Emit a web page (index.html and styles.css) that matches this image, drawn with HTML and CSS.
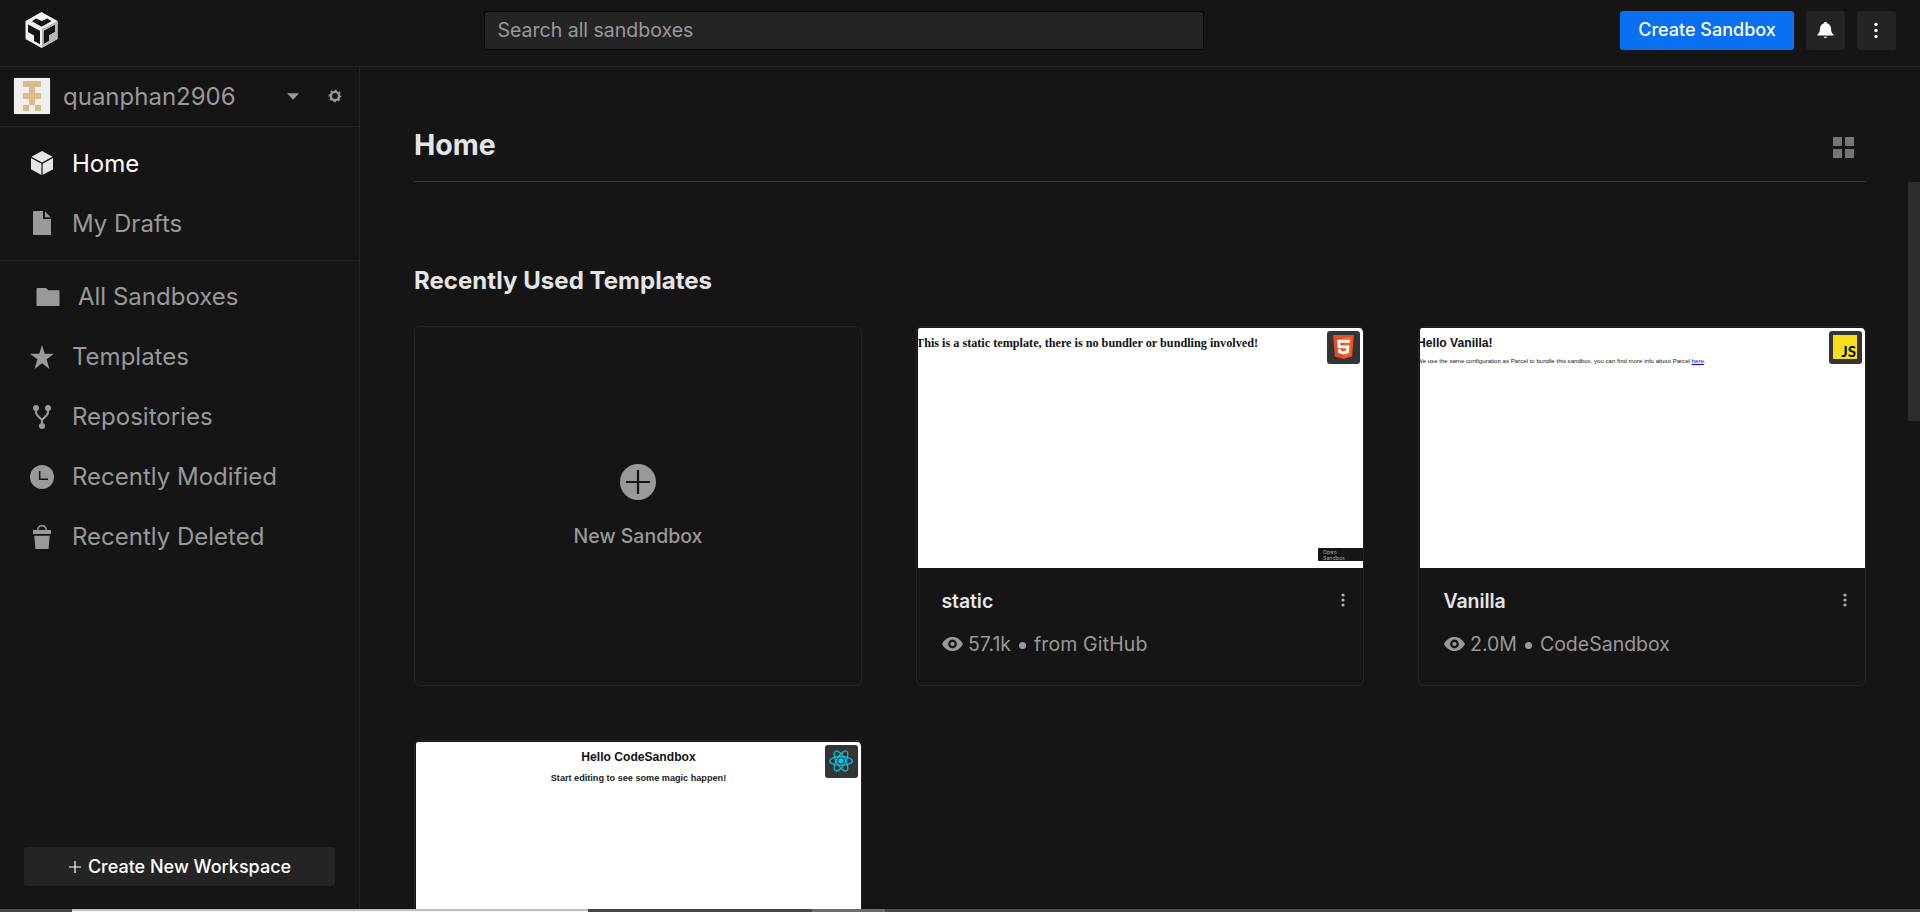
FILE: index.html
```html
<!DOCTYPE html>
<html lang="en">
<head>
<meta charset="utf-8">
<title>Home - CodeSandbox</title>
<link rel="stylesheet" href="styles.css">
</head>
<body>
<div class="app">
  <header class="topbar">
    <svg class="logo" width="34" height="38" viewBox="0 0 34 38">
      <path fill="#f2f2f2" fill-rule="evenodd" d="M16.500 1 32.500 10 V28 L16.500 37 .5 28 V10Z M7 10.300 16.500 15.800 26.500 10.300 22.300 7.600 16.500 10 11 7.600Z M3 13.500 V21 L9 24.500 V30 L15 33.300 V19.800Z M18.500 19.800 V33.300 L24 30 V24.500 L30 21 V13.500Z"/>
      <path fill="#b8b8b8" fill-rule="evenodd" d="M17 18 32.500 10 V28 L17 36.800Z M18.500 19.800 V33.300 L24 30 V24.500 L30 21 V13.500Z"/>
    </svg>
    <div class="search">Search all sandboxes</div>
    <div class="actions">
      <button class="btn btn-primary">Create Sandbox</button>
      <button class="btn btn-icon" aria-label="Notifications">
        <svg width="17" height="17" viewBox="0 0 17 17" fill="#fff"><path d="M8.500 0c.9 0 1.400.6 1.500 1.200 2.300.6 3.800 2.600 4 5.200.2 3 .6 4.600 2.600 6.100v1H.4v-1C2.400 11 2.800 9.400 3 6.400c.2-2.600 1.700-4.600 4-5.200C7.100.6 7.600 0 8.500 0ZM6.800 14.800h3.400c-.2.800-.9 1.200-1.700 1.200s-1.500-.4-1.700-1.200Z"/></svg>
      </button>
      <button class="btn btn-icon" aria-label="More">
        <svg width="5" height="17" viewBox="0 0 5 17" fill="#fff"><circle cx="2" cy="2.500" r="1.700"/><circle cx="2" cy="8.500" r="1.700"/><circle cx="2" cy="14.500" r="1.700"/></svg>
      </button>
    </div>
  </header>

  <div class="body">
    <aside class="sidebar">
      <div class="user">
        <svg class="avatar" width="38" height="38" viewBox="0 0 38 38"><rect x=".5" y=".5" width="37" height="37" rx="2" fill="none" stroke="#242424"/><rect x="1" y="1" width="36" height="36" rx="1" fill="#f0f0f0"/><path fill="#dcba89" d="M10 4h18v6h-6v6h6v6h-6v6h-6v-6h-6v-6h6v-6h-6ZM10 28h6v6h-6ZM22 28h6v6h-6Z"/></svg>
        <span class="user-name">quanphan2906</span>
        <svg class="caret" width="12" height="7" viewBox="0 0 12 7"><path fill="#999" d="M0 .3h12L6 6.700Z"/></svg>
        <svg class="gear" width="14" height="14" viewBox="0 0 14 14" fill="none" stroke="#999"><circle cx="7" cy="7" r="4.100" stroke-width="2.400"/><circle cx="7" cy="7" r="5.700" stroke-width="1.300" stroke-dasharray="2.240 2.237" stroke-dashoffset="1.120"/></svg>
      </div>
      <nav class="nav">
        <a class="item active">
          <svg class="ico" width="24" height="24" viewBox="0 0 24 24" fill="#e5e5e5"><path d="M12 0 22.500 5.700 12 11.500 1.500 5.700Z M1 7 11.400 12.700V24L1 18.200Z M23 7 12.600 12.700V24L23 18.200Z"/></svg>
          <span>Home</span></a>
        <a class="item">
          <svg class="ico" width="24" height="24" viewBox="0 0 24 24" fill="#999"><path d="M4 0H13V8H21V23a1 1 0 0 1-1 1H4a1 1 0 0 1-1-1V1a1 1 0 0 1 1-1ZM15 .6 20.700 6.200H15Z"/></svg>
          <span>My Drafts</span></a>
      </nav>
      <nav class="nav last">
        <a class="item shifted">
          <svg class="ico" width="24" height="24" viewBox="0 0 24 24" fill="#999"><path d="M1.500 3H10l2.500 2.200H22.500a1 1 0 0 1 1 1V20a1 1 0 0 1-1 1H1.500a1 1 0 0 1-1-1V4a1 1 0 0 1 1-1Z"/></svg>
          <span>All Sandboxes</span></a>
        <a class="item">
          <svg class="ico" width="24" height="24" viewBox="0 0 24 24" fill="#999"><path d="m12 0 2.830 8.700H24l-7.400 5.600L19.420 24 12 18.200 4.580 24 7.400 14.300 0 8.700h9.170Z"/></svg>
          <span>Templates</span></a>
        <a class="item">
          <svg class="ico" width="24" height="24" viewBox="0 0 24 24" fill="#999"><circle cx="6" cy="3" r="3"/><circle cx="18" cy="3" r="3"/><circle cx="12" cy="21" r="3"/><path d="M6 3v4q0 2 1.500 3.500L12 15l4.500-4.500Q18 9 18 7V3M12 14v7" fill="none" stroke="#999" stroke-width="2.200"/></svg>
          <span>Repositories</span></a>
        <a class="item">
          <svg class="ico" width="24" height="24" viewBox="0 0 24 24"><circle cx="12" cy="12" r="12" fill="#999"/><path d="M9.700 6v8.200H18" fill="none" stroke="#151515" stroke-width="1.500"/></svg>
          <span>Recently Modified</span></a>
        <a class="item">
          <svg class="ico" width="24" height="24" viewBox="0 0 24 24" fill="#999"><path d="M7.500 5.500C8 2.300 9.600.8 12 .8s4 1.500 4.500 4.700" fill="none" stroke="#999" stroke-width="1.500"/><path d="M3 5h18v4H3ZM4.200 10.700h15.600L18.500 24h-13Z"/></svg>
          <span>Recently Deleted</span></a>
      </nav>
      <button class="btn workspace">
        <svg width="12" height="12" viewBox="0 0 12 12"><path d="M6 0v12M0 6h12" stroke="#fff" stroke-width="1.200"/></svg>
        <span>Create New Workspace</span>
      </button>
    </aside>

    <main class="content">
      <div class="page-head">
        <h1 class="page-title">Home</h1>
        <svg width="21" height="21" viewBox="0 0 21 21" fill="#757575"><path d="M0 0h9v9H0ZM12 0h9v9h-9ZM0 12h9v9H0ZM12 12h9v9h-9Z"/></svg>
      </div>
      <h2 class="section-title">Recently Used Templates</h2>
      <div class="cards">
        <div class="card new">
          <svg width="36" height="36" viewBox="0 0 36 36"><circle cx="18" cy="18" r="18" fill="#999"/><path d="M18 6v24M6 18h24" stroke="#151515" stroke-width="2.200"/></svg>
          <span class="new-label">New Sandbox</span>
        </div>

        <div class="card">
          <div class="thumb">
            <div class="shot-static">This is a static template, there is no bundler or bundling involved!</div>
            <div class="open-tag">Open<br>Sandbox</div>
            <div class="badge">
              <svg width="21" height="24" viewBox="0 0 21 24"><path fill="#e44d26" d="M0 0h21l-1.900 21.400L10.500 24l-8.600-2.600Z"/><path fill="#f16529" d="M10.500 1.900h8.300l-1.600 18L10.500 22Z"/><path fill="#fff" d="M4 4.800h13l-.3 3H7.300l.2 2.600h8.900l-.7 7.500-5.200 1.500-5.200-1.500-.3-4h2.800l.2 1.900 2.500.7 2.500-.7.3-2.600H4.800Z"/></svg>
            </div>
          </div>
          <div class="info">
            <div class="row"><span class="name">static</span><svg width="4" height="14" viewBox="0 0 4 14" fill="#b0b0b0"><circle cx="2" cy="2" r="1.600"/><circle cx="2" cy="7" r="1.600"/><circle cx="2" cy="12" r="1.600"/></svg></div>
            <div class="meta"><svg class="eye" width="21" height="14" viewBox="0 0 21 14"><path fill="#999" fill-rule="evenodd" d="M10.500 0C15 0 18.800 2.700 21 7c-2.200 4.300-6 7-10.500 7S2.200 11.300 0 7C2.200 2.700 6 0 10.500 0Zm0 2.600a4.400 4.400 0 1 0 0 8.800 4.400 4.400 0 0 0 0-8.800Zm0 2.300a2.100 2.100 0 1 1 0 4.200 2.100 2.100 0 0 1 0-4.200Z"/></svg><span>57.1k</span><i class="dot"></i><span class="origin">from GitHub</span></div>
          </div>
        </div>

        <div class="card">
          <div class="thumb">
            <div class="shot-vanilla">Hello Vanilla!</div>
            <div class="shot-vanilla-sub">We use the same configuration as Parcel to bundle this sandbox, you can find more info about Parcel <span class="link">here</span>.</div>
            <div class="badge">
              <div class="js-logo">JS</div>
            </div>
          </div>
          <div class="info">
            <div class="row"><span class="name">Vanilla</span><svg width="4" height="14" viewBox="0 0 4 14" fill="#b0b0b0"><circle cx="2" cy="2" r="1.600"/><circle cx="2" cy="7" r="1.600"/><circle cx="2" cy="12" r="1.600"/></svg></div>
            <div class="meta"><svg class="eye" width="21" height="14" viewBox="0 0 21 14"><path fill="#999" fill-rule="evenodd" d="M10.500 0C15 0 18.800 2.700 21 7c-2.200 4.300-6 7-10.500 7S2.200 11.300 0 7C2.200 2.700 6 0 10.500 0Zm0 2.600a4.400 4.400 0 1 0 0 8.800 4.400 4.400 0 0 0 0-8.800Zm0 2.300a2.100 2.100 0 1 1 0 4.200 2.100 2.100 0 0 1 0-4.200Z"/></svg><span>2.0M</span><i class="dot"></i><span>CodeSandbox</span></div>
          </div>
        </div>

        <div class="card">
          <div class="thumb">
            <div class="shot-react">Hello CodeSandbox</div>
            <div class="shot-react-sub">Start editing to see some magic happen!</div>
            <div class="badge">
              <svg width="24" height="24" viewBox="0 0 24 24" fill="none" stroke="#00d1f0" stroke-width="1.100"><circle cx="12" cy="12" r="2.100" fill="#00d1f0"/><ellipse cx="12" cy="12" rx="11.400" ry="4.400"/><ellipse cx="12" cy="12" rx="11.400" ry="4.400" transform="rotate(60 12 12)"/><ellipse cx="12" cy="12" rx="11.400" ry="4.400" transform="rotate(120 12 12)"/></svg>
            </div>
          </div>
        </div>
      </div>
      <div class="scrollbar"></div>
    </main>
  </div>

  <div class="strip"><i class="seg seg-a"></i><i class="seg seg-b"></i><i class="seg seg-c"></i><i class="seg seg-d"></i></div>
</div>
</body>
</html>
```
FILE: styles.css
```css
* { box-sizing: border-box; }
body {
  margin: 0;
  background: #151515;
  color: #999;
  font-family: Inter, "Liberation Sans", sans-serif;
  overflow: hidden;
}
.app { display: flex; flex-direction: column; height: 912px; }
svg { display: block; flex: none; }

.topbar {
  flex: none;
  display: grid;
  grid-template-columns: 484px 720px 1fr;
  height: 67px;
  padding-top: 11px;
  border-bottom: 1px solid #242424;
}
.logo { margin-left: 25px; }
.search {
  height: 39px;
  padding-left: 12.5px;
  background: #242424;
  border: 1px solid #040404;
  border-radius: 3px;
  font-size: 19.5px;
  line-height: 36px;
}
.actions { display: flex; justify-content: flex-end; gap: 12px; padding-right: 24px; }
.btn {
  display: flex;
  align-items: center;
  justify-content: center;
  height: 39px;
  padding: 0;
  border: 0;
  border-radius: 3px;
  background: #242424;
  color: #fff;
  font: 500 18px/36px Inter, "Liberation Sans", sans-serif;
}
.btn-primary { width: 174px; padding-bottom: 2px; background: #0971f1; }
.btn-icon { width: 39px; }

.body { flex: 1; min-height: 0; display: flex; }
.sidebar {
  flex: none;
  display: flex;
  flex-direction: column;
  width: 360px;
  border-right: 1px solid #242424;
}
.user {
  display: flex;
  align-items: center;
  height: 60px;
  padding: 0 17px 0 13px;
  border-bottom: 1px solid #242424;
  font-size: 24px;
}
.user-name { flex: 1; margin-left: 12px; }
.avatar { margin-bottom: 1px; }
.caret { margin-bottom: 1px; }
.gear { margin: 0 0 1px 29px; }
.nav { padding: 6px 0 7px; border-bottom: 1px solid #242424; }
.nav.last { border: 0; }
.nav.last span { padding-bottom: 2px; }
.item {
  display: flex;
  align-items: center;
  gap: 18px;
  height: 60px;
  padding-left: 30px;
  font-size: 24px;
}
.item.shifted { padding-left: 36px; }
.item.active { color: #fff; }
.workspace { width: 311px; margin: auto 0 23px 24px; padding-left: 1px; gap: 7px; }

.content {
  position: relative;
  flex: 1;
  min-width: 0;
  overflow: hidden;
  padding: 0 54px;
}
.page-head {
  display: flex;
  align-items: center;
  justify-content: space-between;
  height: 115px;
  padding: 46px 12px 0 0;
  border-bottom: 1px solid #363636;
}
.page-title { margin: 0 0 6px; font-size: 28.5px; font-weight: 700; color: #e5e5e5; }
.section-title {
  margin: 84px 0 31px;
  font-size: 24px;
  line-height: 29px;
  font-weight: 700;
  letter-spacing: .04px;
  color: #e5e5e5;
}
.cards { display: grid; grid-template-columns: repeat(3, 448px); gap: 54px; }
.card {
  height: 360px;
  border: 1px solid #242424;
  border-radius: 6px;
  overflow: hidden;
}
.new { display: flex; flex-direction: column; align-items: center; padding-top: 137px; }
.new-label { margin-top: 24px; font-size: 19.5px; line-height: 24px; font-weight: 500; }
.thumb {
  position: relative;
  height: 240px;
  margin: 1px 0 0 1px;
  overflow: hidden;
  background: #fff;
  border-radius: 2px 4px 0 0;
  color: #111;
  white-space: nowrap;
}
.badge {
  position: absolute;
  top: 3px;
  right: 3px;
  display: flex;
  align-items: center;
  justify-content: center;
  width: 33px;
  height: 33px;
  padding: 0 1px 1px 0;
  border-radius: 3px;
  background: #343434;
}
.js-logo {
  display: flex;
  align-items: flex-end;
  justify-content: flex-end;
  width: 24px;
  height: 24px;
  padding: 0 1px 1px 0;
  background: #f7df1e;
  color: #000;
  font: 700 15px/14px Lato, sans-serif;
}
.shot-static { margin: 8px 0 0 -2px; font: 700 12.190px/14px "Liberation Serif", serif; }
.open-tag {
  position: absolute;
  right: 0;
  bottom: 7px;
  width: 45px;
  height: 13px;
  padding: 1px 0 0 5px;
  background: #151515;
  border-radius: 1px 0 0 1px;
  color: #aaa;
  font: 5.300px/6px Inter, sans-serif;
}
.shot-vanilla { margin: 8px 0 0 -3px; font: 700 12.150px/14px "Liberation Sans", sans-serif; }
.shot-vanilla-sub { margin: 7px 0 0 -3px; font: 6.100px/8px "Liberation Sans", sans-serif; }
.link { color: #00e; text-decoration: underline; }
.shot-react { margin-top: 8px; text-align: center; font: 700 12.120px/14px "Liberation Sans", sans-serif; }
.shot-react-sub { margin-top: 9px; text-align: center; font: 700 9.130px/10px "Liberation Sans", sans-serif; color: #222; }
.info { padding: 21px 18px 0 24.5px; }
.row { display: flex; align-items: center; justify-content: space-between; height: 24px; }
.row svg { margin-bottom: 2px; }
.name { font-size: 19.5px; font-weight: 600; letter-spacing: -.1px; color: #e5e5e5; }
.meta { display: flex; align-items: center; height: 24px; margin-top: 19px; font-size: 19.5px; }
.eye { margin: 0 5.500px 1px 0; }
.dot { width: 7px; height: 7px; margin: 2px 8px 0; border-radius: 50%; background: #999; }
.origin { letter-spacing: .12px; }
.scrollbar {
  position: absolute;
  top: 115px;
  right: 0;
  width: 12px;
  height: 239px;
  background: #2c2c2c;
}

.strip { flex: none; display: flex; height: 3px; background: #484848; }
.seg-a { width: 72px; }
.seg-b { width: 516px; background: #f5f5f5; border-top: 2px solid #c0c0c0; }
.seg-c { width: 224px; }
.seg-d { width: 73px; background: #6c6c6c; }
```
